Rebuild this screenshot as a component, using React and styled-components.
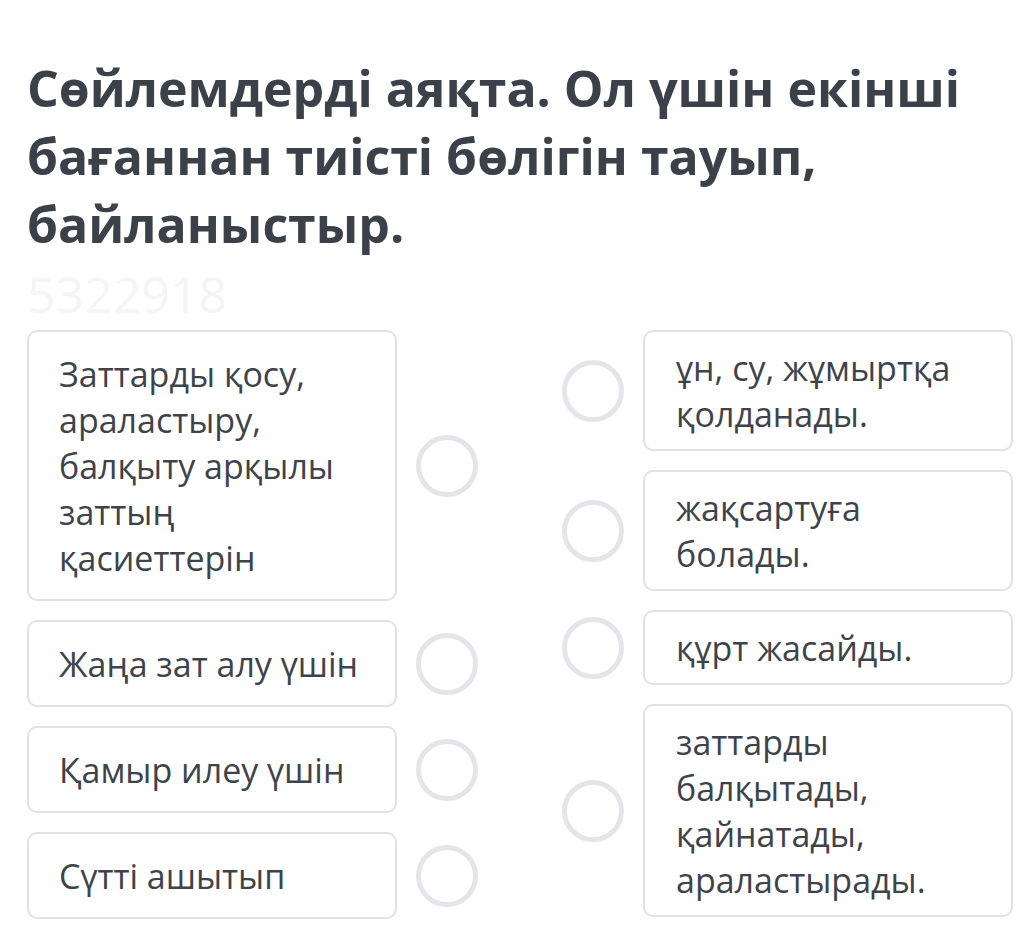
import React from 'react'
import styled, { createGlobalStyle } from 'styled-components'

const GlobalStyle = createGlobalStyle`
  body {
    margin: 0;
    background: #ffffff;
    font-family: 'Open Sans', 'Noto Sans', sans-serif;
  }
`

const leftItems = [
  { text: 'Заттарды қосу, араластыру, балқыту арқылы заттың қасиеттерін', width: 290 },
  { text: 'Жаңа зат алу үшін' },
  { text: 'Қамыр илеу үшін' },
  { text: 'Сүтті ашытып' },
]

const rightItems = [
  { text: 'ұн, су, жұмыртқа қолданады.' },
  { text: 'жақсартуға болады.', width: 200 },
  { text: 'құрт жасайды.' },
  { text: 'заттарды балқытады, қайнатады, араластырады.', width: 260 },
]

const App = () => {
  return (
    <Page>
      <GlobalStyle />
      <Title>Сөйлемдерді аяқта. Ол үшін екінші бағаннан тиісті бөлігін тауып, байланыстыр.</Title>
      <Watermark>5322918</Watermark>
      <Columns>
        <Column>
          {leftItems.map((item) => (
            <Row key={item.text}>
              <Card side='left'>
                <CardText style={item.width ? { maxWidth: item.width } : undefined}>{item.text}</CardText>
              </Card>
              <Radio />
            </Row>
          ))}
        </Column>
        <Column>
          {rightItems.map((item) => (
            <Row key={item.text}>
              <Radio />
              <Card side='right'>
                <CardText style={item.width ? { maxWidth: item.width } : undefined}>{item.text}</CardText>
              </Card>
            </Row>
          ))}
        </Column>
      </Columns>
    </Page>
  )
}

const Page = styled.div`
  padding: 54px 4px 20px 27px;
`

const Title = styled.h1`
  margin: 0;
  font-family: 'Open Sans', sans-serif;
  font-weight: 700;
  font-size: 50px;
  line-height: 68px;
  color: #3c4149;
  max-width: 975px;
`

const Watermark = styled.div`
  font-size: 50px;
  line-height: 68px;
  color: #f5f5f5;
  margin-top: 2px;
`

const Columns = styled.div`
  display: flex;
  justify-content: space-between;
  margin-top: 2px;
`

const Column = styled.div`
  display: flex;
  flex-direction: column;
  gap: 19px;
`

const Row = styled.div`
  display: flex;
  align-items: center;
  gap: 19px;
`

const Card = styled.div`
  box-sizing: border-box;
  width: 370px;
  border: 2px solid #e2e2e2;
  border-radius: 10px;
  background: #fff;
  padding: ${(p) => (p.side === 'left' ? '19px 30px 18px 30px' : '13px 30px 12px 31px')};
`

const CardText = styled.div`
  font-size: 34px;
  line-height: 46px;
  color: #3e434a;
`

const Radio = styled.div`
  box-sizing: border-box;
  flex: none;
  width: 62px;
  height: 62px;
  border-radius: 50%;
  border: 5px solid #e3e5e8;
`

export default App
